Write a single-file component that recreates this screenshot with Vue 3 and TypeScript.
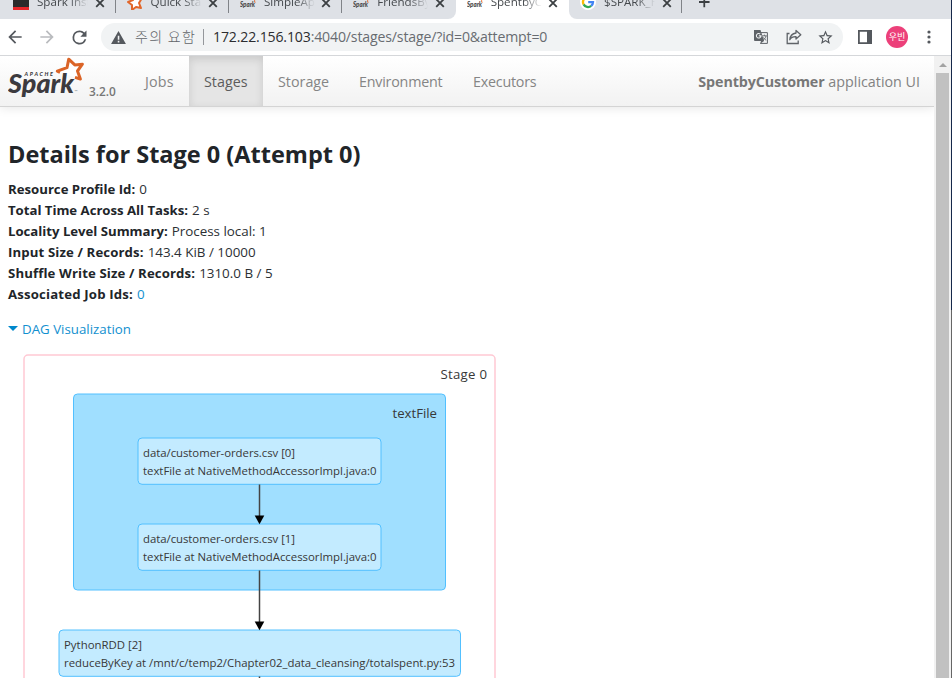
<script setup lang="ts">
type TabIcon = 'board' | 'star' | 'spark' | 'google'

interface Tab {
  title: string
  icon: TabIcon
  state: '' | 'active' | 'before' | 'after'
}

interface RddNode {
  x: number
  y: number
  w: number
  name: string
  call: string
  nameLength: number
  callLength: number
}

const tabs: Tab[] = [
  { title: 'Spark Install', icon: 'board', state: '' },
  { title: 'Quick Start', icon: 'star', state: '' },
  { title: 'SimpleApp', icon: 'spark', state: '' },
  { title: 'FriendsByAge', icon: 'spark', state: 'before' },
  { title: 'SpentbyCustomer', icon: 'spark', state: 'active' },
  { title: '$SPARK_HOME', icon: 'google', state: 'after' },
]

const sections = ['Jobs', 'Stages', 'Storage', 'Environment', 'Executors']

const details = [
  { label: 'Resource Profile Id:', value: '0', size: 'a' },
  { label: 'Total Time Across All Tasks:', value: '2 s', size: 'b' },
  { label: 'Locality Level Summary:', value: 'Process local: 1', size: 'b' },
  { label: 'Input Size / Records:', value: '143.4 KiB / 10000', size: 'c' },
  { label: 'Shuffle Write Size / Records:', value: '1310.0 B / 5', size: 'c' },
  { label: 'Associated Job Ids:', value: '0', size: 'd', link: true },
]

const nodes: RddNode[] = [
  { x: 138, y: 83, w: 243, name: 'data/customer-orders.csv [0]', call: 'textFile at NativeMethodAccessorImpl.java:0', nameLength: 152, callLength: 233.5 },
  { x: 138, y: 169, w: 243, name: 'data/customer-orders.csv [1]', call: 'textFile at NativeMethodAccessorImpl.java:0', nameLength: 152, callLength: 233.5 },
  { x: 59, y: 275, w: 401.5, name: 'PythonRDD [2]', call: 'reduceByKey at /mnt/c/temp2/Chapter02_data_cleansing/totalspent.py:53', nameLength: 78, callLength: 391 },
]

const edges = [
  { from: 129.5, to: 169 },
  { from: 215.5, to: 275 },
  { from: 321.5, to: 361 },
]
</script>

<template>
  <div class="window">
    <div class="browser">
      <div class="tabstrip">
        <div v-for="tab in tabs" :key="tab.title" class="tab" :class="tab.state">
          <svg v-if="tab.icon === 'board'" class="favicon" viewBox="0 0 16 16">
            <rect width="16" height="16" fill="#2b2b2b" />
            <rect y="13" width="16" height="3" fill="#e8262a" />
          </svg>
          <svg v-else-if="tab.icon === 'star'" class="favicon" viewBox="0 0 16 16">
            <path d="M7 1l3 4 5-1-3 5 2 5-5-1-4 3v-5L1 8l5-2z" fill="#fff" stroke="#e2672a" stroke-width="2" stroke-linejoin="round" />
          </svg>
          <svg v-else-if="tab.icon === 'spark'" class="favicon" viewBox="0 0 16 16">
            <text x="0" y="12.5" class="mini" textLength="15" lengthAdjust="spacingAndGlyphs">Spark</text>
            <path d="M11.5 6l1-2 1.2 1.2 1.8-.4-1 2 .6 2" fill="none" stroke="#e2672a" stroke-width="1" />
          </svg>
          <svg v-else class="favicon" viewBox="0 0 16 16">
            <circle cx="8" cy="8" r="8" fill="#fff" />
            <g fill="none" stroke-width="2.3">
              <path d="M11.6 4.4A5 5 0 0 0 3.6 5.6" stroke="#ea4335" />
              <path d="M3.6 5.6a5 5 0 0 0 0 4.8" stroke="#fbbc05" />
              <path d="M3.6 10.4a5 5 0 0 0 7.6 1.5" stroke="#34a853" />
              <path d="M11.2 11.9A5 5 0 0 0 13 8.2H8.2" stroke="#4285f4" />
            </g>
          </svg>
          <span class="title">{{ tab.title }}</span>
          <svg class="close" viewBox="0 0 10 10"><path d="M1.2 1.2l7.6 7.6M8.8 1.2L1.2 8.8" /></svg>
        </div>
        <svg class="plus" viewBox="0 0 12 12"><path d="M6 0v12M0 6h12" /></svg>
      </div>

      <div class="toolbar">
        <svg class="ico back" viewBox="0 0 24 24"><path d="M20 11H7.83l5.59-5.59L12 4l-8 8 8 8 1.41-1.41L7.83 13H20v-2z" /></svg>
        <svg class="ico forward" viewBox="0 0 24 24"><path d="M12 4l-1.41 1.41L16.17 11H4v2h12.17l-5.58 5.59L12 20l8-8z" /></svg>
        <svg class="ico reload" viewBox="0 0 24 24"><path d="M17.65 6.35A7.96 7.96 0 0 0 12 4a8 8 0 1 0 7.73 10h-2.08A6 6 0 1 1 12 6c1.66 0 3.14.69 4.22 1.78L13 11h7V4l-2.35 2.35z" /></svg>
        <div class="omnibox">
          <svg class="warn" viewBox="0 0 16 14"><path d="M8 0l8 14H0zM7.2 5v4.5h1.7V5zm0 5.6v1.7h1.7v-1.7z" fill-rule="evenodd" /></svg>
          <span class="insecure">주의 요함</span>
          <span class="divider"></span>
          <span class="url"><b>172.22.156.103</b>:4040/stages/stage/?id=0&amp;attempt=0</span>
          <svg class="translate" viewBox="0 0 14 14">
            <path d="M6 2.6h7.4v10.8H6.2" fill="none" stroke="#5f6368" />
            <path d="M0 0h6.5l3.6 11H1a1 1 0 0 1-1-1z" fill="#5f6368" />
            <path d="M6.2 4A2.3 2.3 0 1 0 7 5.9H4.8" fill="none" stroke="#f1f3f4" stroke-width="1.1" />
            <path d="M8.2 5.8h4.6M10.4 4.6v1.2M12 6c-.4 1.8-1.6 3.2-2.8 4M9.2 7.3c.6 1.3 1.6 2.2 3 3" fill="none" stroke="#5f6368" stroke-width=".9" />
            <path d="M7 11l-.8 2.8L10 11z" fill="#5f6368" />
          </svg>
          <svg class="share" viewBox="0 0 16 16" fill="none" stroke="#5f6368" stroke-width="1.3">
            <path d="M3.5 4.5H1.2v10h11v-3" />
            <path d="M10 1.5l4.8 4.2L10 10V7.6C7 7.5 5 8.5 3.8 10.7 4.1 7 6.3 4.5 10 4z" stroke-linejoin="round" />
          </svg>
          <svg class="bookmark" viewBox="0 0 24 24"><path d="M22 9.24l-7.19-.62L12 2 9.19 8.63 2 9.24l5.46 4.73L5.82 21 12 17.27 18.18 21l-1.63-7.03L22 9.24zM12 15.4l-3.76 2.27 1-4.28-3.32-2.88 4.38-.38L12 6.1l1.71 4.04 4.38.38-3.32 2.88 1 4.28L12 15.4z" /></svg>
        </div>
        <svg class="panel" viewBox="0 0 14 14"><path d="M0 0h14v14H0zM1.8 1.8v10.4H9V1.8z" fill-rule="evenodd" /></svg>
        <span class="avatar">우빈</span>
        <svg class="menu" viewBox="0 0 4 14"><circle cx="2" cy="2" r="1.6" /><circle cx="2" cy="7" r="1.6" /><circle cx="2" cy="12" r="1.6" /></svg>
      </div>

      <div class="viewport">
        <div class="page">
          <nav class="navbar">
            <div class="brand">
              <svg class="logo" viewBox="0 0 80 44">
                <path class="star" d="M52 16.5L49.3 15.2 59 11.7 60.7 3.2 66.8 8.9 74.4 8.2 69.5 15 72.4 23 67 21.4" />
                <text x="16.5" y="19.6" class="apache" textLength="28.5">APACHE</text>
                <text x="0" y="36.5" class="spark" textLength="66" lengthAdjust="spacingAndGlyphs">Spark</text>
                <text x="66.5" y="36.5" class="tm">™</text>
              </svg>
              <span class="version">3.2.0</span>
            </div>
            <a v-for="s in sections" :key="s" class="section" :class="[s.toLowerCase(), { current: s === 'Stages' }]">{{ s }}</a>
            <p class="app"><strong>SpentbyCustomer</strong> application UI</p>
          </nav>

          <main>
            <h3>Details for Stage 0 (Attempt 0)</h3>
            <ul>
              <li v-for="d in details" :key="d.label">
                <strong :class="d.size">{{ d.label }}</strong><a v-if="d.link">{{ d.value }}</a><span v-else>{{ d.value }}</span>
              </li>
            </ul>
            <div class="toggle"><i></i><a>DAG Visualization</a></div>
          </main>

          <svg class="dag" width="500" height="324" viewBox="0 0 500 324">
            <rect class="stage" x="24" y="0" width="471" height="400" rx="4" />
            <text class="cluster-label" x="440.5" y="24" textLength="46.5">Stage 0</text>
            <rect class="cluster" x="73.5" y="39" width="372" height="196" rx="4" />
            <text class="cluster-label" x="392.5" y="63" textLength="44.5">textFile</text>
            <g v-for="n in nodes" :key="n.name">
              <rect class="node" :x="n.x" :y="n.y" :width="n.w" height="46.3" rx="4" />
              <text class="node-label" :x="n.x + 5" :y="n.y + 18.5" :textLength="n.nameLength">{{ n.name }}</text>
              <text class="node-label" :x="n.x + 5" :y="n.y + 36.5" :textLength="n.callLength">{{ n.call }}</text>
            </g>
            <g v-for="e in edges" :key="e.from">
              <path class="edge" :d="`M259.5 ${e.from}V${e.to - 6}`" />
              <path :d="`M254.7 ${e.to - 8.5}h9.6l-4.8 8.8z`" />
            </g>
          </svg>
        </div>
        <div class="scrollbar"><i class="up"></i><div class="thumb"></div></div>
      </div>
    </div>
    <div class="edge-strip"></div>
  </div>
</template>

<style>
body {
  overflow: hidden;
}
</style>

<style scoped>
.window {
  display: flex;
  width: 952px;
  height: 678px;
  overflow: hidden;
  background: #fff;
  color: #212529;
  font-family: "Open Sans", "Noto Sans CJK KR", sans-serif;
}
.browser {
  width: 951px;
  display: flex;
  flex-direction: column;
}
.edge-strip {
  width: 1px;
  background: linear-gradient(#16284a 310px, #666 310px);
}

.tabstrip {
  display: flex;
  align-items: flex-end;
  height: 19px;
  flex: none;
  background: #fff;
  overflow: hidden;
}
.tab {
  display: flex;
  align-items: center;
  box-sizing: border-box;
  width: 113.4px;
  flex: none;
  height: 32px;
  padding-left: 11px;
  background: linear-gradient(#808388, #808388) right top / 1px 26px no-repeat, #dee1e6;
}
.tab:first-child {
  width: 115.5px;
  padding-left: 13px;
}
.tab.before {
  border-radius: 0 0 8px 0;
  background: #dee1e6;
}
.tab.active {
  background: #fff;
}
.tab.after {
  border-radius: 0 0 0 8px;
}
.favicon {
  width: 16px;
  height: 16px;
  flex: none;
  margin-bottom: 2px;
}
.mini {
  font: italic 900 7.5px Lato, sans-serif;
  fill: #4a4a48;
}
.title {
  width: 52px;
  margin: 0 0 2px 8px;
  font-size: 11.6px;
  line-height: 16px;
  white-space: nowrap;
  overflow: hidden;
  color: #45494d;
  -webkit-mask-image: linear-gradient(90deg, #000 62%, transparent 98%);
  mask-image: linear-gradient(90deg, #000 62%, transparent 98%);
}
.close {
  width: 10px;
  height: 10px;
  margin: 0 0 1px 5.5px;
  stroke: #3c4043;
  stroke-width: 1.8;
  fill: none;
}
.plus {
  box-sizing: border-box;
  flex: 1;
  height: 32px;
  padding: 9px 241px 11px 17px;
  background: #dee1e6;
  stroke: #3c4043;
  stroke-width: 2;
}

.toolbar {
  display: flex;
  align-items: center;
  box-sizing: border-box;
  height: 37px;
  flex: none;
  padding-left: 5px;
  background: #fff;
  border-bottom: 1px solid #d5d7da;
}
.ico {
  width: 20px;
  height: 20px;
  margin-right: 12px;
  fill: #54585d;
}
.forward {
  fill: #b9bbbe;
}
.reload {
  width: 21px;
  height: 21px;
  margin-right: 11px;
}
.omnibox {
  display: flex;
  align-items: center;
  box-sizing: border-box;
  width: 742px;
  height: 28px;
  padding-left: 10px;
  border-radius: 14px;
  background: #f1f3f4;
}
.warn {
  width: 15px;
  height: 13px;
  fill: #54585d;
}
.insecure {
  width: 68px;
  margin: 0 0 2px 9px;
  font: 300 14px/28px "Noto Sans CJK KR", sans-serif;
  letter-spacing: 1.3px;
  color: #5f6368;
  white-space: nowrap;
}
.divider {
  width: 1px;
  height: 16px;
  background: #94979b;
}
.url {
  width: 534px;
  margin-left: 9px;
  font-size: 14.1px;
  letter-spacing: -0.15px;
  line-height: 28px;
  color: #686c71;
}
.url b {
  font-weight: 400;
  color: #2c2d30;
}
.translate {
  width: 14px;
  height: 14px;
  margin-left: 7px;
}
.share {
  width: 16px;
  height: 16px;
  margin-left: 18px;
}
.bookmark {
  width: 17px;
  height: 17px;
  margin-left: 15px;
  fill: #54585d;
}
.panel {
  width: 14px;
  height: 14px;
  margin-left: 15px;
  fill: #54585d;
}
.avatar {
  width: 22px;
  height: 22px;
  margin-left: 14px;
  border-radius: 50%;
  background: #ec407a;
  color: #fff;
  font: 400 9px/21px "Noto Sans CJK KR", sans-serif;
  text-align: center;
}
.menu {
  width: 4px;
  height: 14px;
  margin-left: 19px;
  fill: #54585d;
}

.viewport {
  display: flex;
  flex: 1;
  min-height: 0;
}
.page {
  width: 934px;
  overflow: hidden;
}
.navbar {
  display: flex;
  box-sizing: border-box;
  height: 51px;
  background: linear-gradient(#fff, #f2f2f2);
  border-bottom: 1px solid #d4d4d4;
  box-shadow: 0 1px 10px rgba(0, 0, 0, 0.1);
}
.brand {
  display: flex;
  box-sizing: border-box;
  width: 130px;
  padding-left: 8px;
}
.logo {
  width: 80px;
  height: 44px;
  flex: none;
}
.star {
  fill: #fff;
  stroke: #db6427;
  stroke-width: 3;
  stroke-linejoin: round;
}
.apache {
  font: italic 900 5.4px Lato, sans-serif;
  fill: #3c3a3e;
}
.spark {
  font: italic 900 27px Lato, sans-serif;
  fill: #3c3a3e;
}
.tm {
  font: 4px Lato, sans-serif;
  fill: #777;
}
.version {
  margin-left: 1px;
  padding-top: 26px;
  font-size: 11.9px;
  font-weight: 600;
  line-height: 19px;
  color: #777;
}
.section {
  box-sizing: border-box;
  padding-left: 15px;
  font-size: 14.3px;
  line-height: 51px;
  color: #858585;
}
.jobs {
  width: 59px;
  letter-spacing: 0.2px;
}
.stages {
  width: 74px;
}
.storage {
  width: 81px;
}
.environment {
  width: 114px;
  letter-spacing: -0.22px;
}
.executors {
  width: 94px;
  letter-spacing: -0.22px;
}
.section.current {
  background: #e5e5e5;
  box-shadow: inset 0 3px 8px rgba(0, 0, 0, 0.125);
  color: #5c5c5c;
}
.app {
  margin: 0 14px 0 auto;
  font-size: 14.3px;
  line-height: 51px;
  color: #828282;
}
.app strong {
  letter-spacing: -0.1px;
  color: #777;
}

main {
  padding-left: 8px;
}
h3 {
  margin: 31px 0 9px;
  font-size: 23.5px;
  line-height: 32px;
  font-weight: 700;
}
ul {
  margin: 0;
  padding: 0;
  list-style: none;
}
li {
  height: 21px;
  font-size: 13.4px;
  line-height: 20px;
}
li strong {
  margin-right: 4px;
  font-size: 13.2px;
}
li strong.b {
  letter-spacing: -0.02px;
}
li strong.c {
  letter-spacing: 0.12px;
}
li strong.d {
  letter-spacing: 0.17px;
}
main span {
  color: #2c3034;
}
main a {
  color: #1290cf;
}
.toggle {
  display: flex;
  align-items: center;
  height: 21px;
  margin-top: 13px;
  font-size: 13.3px;
}
.toggle i {
  width: 0;
  margin-right: 4px;
  border: 5px solid transparent;
  border-top-color: #08c;
  border-bottom: 0;
}
.dag {
  display: block;
  margin-top: 16px;
  overflow: visible;
}
.stage {
  fill: #fff;
  stroke: #ffc9d4;
  stroke-width: 1.5;
}
.cluster {
  fill: #a0dfff;
  stroke: #52c0ff;
}
.node {
  fill: #c3ebff;
  stroke: #52c0ff;
}
.edge {
  stroke: #444;
  stroke-width: 1.5;
}
.cluster-label {
  font-size: 13.2px;
  fill: #383838;
}
.node-label {
  font-size: 11.4px;
  fill: #383838;
}

.scrollbar {
  display: flex;
  flex-direction: column;
  align-items: center;
  width: 17px;
  background: #f1f1f1;
}
.up {
  margin: 7px 0 6px;
  border: 4px solid transparent;
  border-top: 0;
  border-bottom-color: #a3a3a3;
}
.thumb {
  width: 13px;
  flex: 1;
  background: #c1c1c1;
}
</style>
